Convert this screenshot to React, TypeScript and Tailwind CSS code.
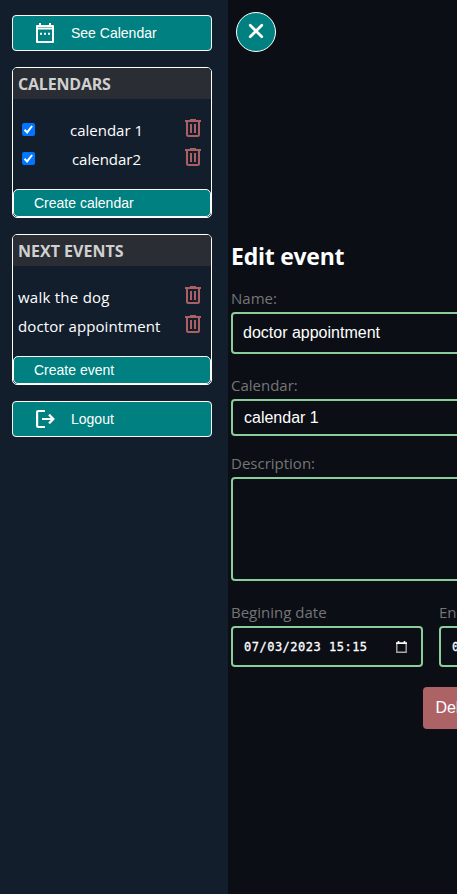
import React from 'react';

const sans = "font-['Open_Sans','Noto_Sans',sans-serif]";
const arial = "font-['Liberation_Sans',Arial,sans-serif]";

function CalendarIcon() {
  return (
    <svg width="24" height="24" viewBox="0 0 24 24" fill="none" stroke="white" strokeWidth="2" className="shrink-0">
      <path d="M4 5h16v16H4z" strokeLinejoin="round" />
      <path d="M4 7.5h16" />
      <path d="M7 2v3M17 2v3" />
      <path d="M7 12.8h2M11 12.8h2M15 12.8h2" />
    </svg>
  );
}

function LogoutIcon() {
  return (
    <svg width="24" height="24" viewBox="0 0 24 24" fill="none" stroke="white" strokeWidth="2.2" className="shrink-0">
      <path d="M12 4H5q-.9 0-.9.9v14.2q0 .9.9.9h7" />
      <path d="M9 12h11M16 7.6l4.4 4.4-4.4 4.4" />
    </svg>
  );
}

function Trash() {
  return (
    <svg width="16" height="18" viewBox="0 0 16 18" fill="none" stroke="#ac6064" className="-mt-[5px] shrink-0">
      <path d="M0 2h16M5 .8h6" strokeWidth="2" />
      <path d="M2 2v13.5q0 1.5 1.5 1.5h9q1.5 0 1.5-1.5V2" strokeWidth="2" />
      <path d="M6 5v9M10 5v9" strokeWidth="2" />
    </svg>
  );
}

function Panel({ title, action, children }: { title: React.ReactNode; action: string; children: React.ReactNode }) {
  return (
    <section className="flex h-[151px] w-[200px] flex-col rounded-[5px] border border-white">
      <h2 className={`h-[31px] shrink-0 rounded-t-[4px] bg-[#2a2d34] pl-[5px] text-[16px] font-bold leading-[33px] text-[#d0d0d0] ${sans}`}>{title}</h2>
      <div className="flex flex-1 flex-col pt-[17px]">{children}</div>
      <button className={`h-[28px] shrink-0 rounded-[5px] border border-white bg-[#008080] pl-[20px] text-left text-[14px] leading-[26px] text-white ${arial}`}>{action}</button>
    </section>
  );
}

function CalendarRow({ name }: { name: string }) {
  return (
    <div className="flex h-[29px] items-center justify-between pl-[9px] pr-[10px]">
      <span className="-mt-[3px] flex h-[13px] w-[13px] items-center justify-center rounded-[2px] bg-[#0075ff]">
        <svg width="11" height="11" viewBox="0 0 11 11" fill="none" stroke="white" strokeWidth="2"><path d="M1.5 5.8l2.6 2.6 5-6.4" /></svg>
      </span>
      <span className={`-ml-[7px] whitespace-nowrap text-[15px] text-white ${sans}`}>{name}</span>
      <Trash />
    </div>
  );
}

function EventRow({ name, spacing }: { name: string; spacing: string }) {
  return (
    <div className="flex h-[29px] items-center justify-between pl-[5px] pr-[10px]">
      <span className={`whitespace-nowrap text-[15px] text-white ${spacing} ${sans}`}>{name}</span>
      <Trash />
    </div>
  );
}

function Label({ children }: { children: string }) {
  return <div className={`h-[22px] whitespace-nowrap text-[15px] leading-[22px] text-[#757575] ${sans}`}>{children}</div>;
}

function DateField({ label, value }: { label: string; value: string }) {
  return (
    <div className="w-[192px] shrink-0">
      <Label>{label}</Label>
      <div className="mt-[3px] flex h-[41px] items-center justify-between rounded-[4px] border-2 border-[#8bcd9b] pl-[11px] pr-[14px] text-white">
        <span className="whitespace-pre font-['DejaVu_Sans_Mono',monospace] text-[12px] tracking-[0.5px] [-webkit-text-stroke:0.3px_white]">{value}</span>
        <svg width="11" height="12" viewBox="0 0 11 12" fill="none" stroke="#a8a8a8"><path d="M.8 2h9.4v9.2H.8z" strokeWidth="1.4" /><path d="M0 2.3h11M2.5 0v2M8.5 0v2" stroke="white" strokeWidth="1.6" /></svg>
      </div>
    </div>
  );
}

export default function App() {
  return (
    <div className="flex h-[894px] w-[457px] overflow-hidden bg-[#0b0e15]">
      <aside className="flex w-[228px] shrink-0 flex-col gap-[16px] bg-[#131e2d] pl-[12px] pt-[15px]">
        <button className={`flex h-[36px] w-[200px] items-center rounded-[4px] border border-white bg-[#008080] pl-[20px] text-[14px] text-white ${arial}`}>
          <CalendarIcon /><span className="ml-[14px]">See Calendar</span>
        </button>
        <Panel title={<span className="tracking-[-0.2px]">CALENDARS</span>} action="Create calendar">
          <CalendarRow name="calendar 1" />
          <CalendarRow name="calendar2" />
        </Panel>
        <Panel title={<span className="tracking-[0px]">NEXT EVENTS</span>} action="Create event">
          <EventRow name="walk the dog" spacing="tracking-[0.25px]" />
          <EventRow name="doctor appointment" spacing="tracking-[0.1px]" />
        </Panel>
        <button className={`flex h-[36px] w-[200px] items-center rounded-[4px] border border-white bg-[#008080] pl-[20px] text-[14px] text-white ${arial}`}>
          <LogoutIcon /><span className="ml-[14px]">Logout</span>
        </button>
      </aside>
      <main className="min-w-0 flex-1 overflow-hidden pl-[3px] pt-[12px]">
        <button className="ml-[5px] flex h-[40px] w-[40px] items-center justify-center rounded-full border border-white bg-[#008080]">
          <svg width="16" height="16" viewBox="0 0 16 16" className="-mt-[2px]" stroke="white" strokeWidth="2.7" strokeLinecap="round"><path d="M2.2 2.2l11.6 11.6M13.8 2.2L2.2 13.8" /></svg>
        </button>
        <form className="mt-[188px] w-[400px]">
          <h1 className={`h-[34px] text-[23px] font-bold leading-[33px] tracking-[-0.25px] text-white ${sans}`}>Edit event</h1>
          <div className="mt-[13px]"><Label>Name:</Label></div>
          <div className={`mt-[3px] h-[42px] rounded-[4px] border-2 border-[#8bcd9b] pl-[10px] text-[16px] leading-[37px] text-white ${arial}`}>doctor appointment</div>
          <div className="mt-[20px]"><Label>Calendar:</Label></div>
          <div className={`mt-[3px] h-[37px] rounded-[4px] border-2 border-[#8bcd9b] pl-[11px] text-[16px] leading-[33px] text-white ${arial}`}>calendar 1</div>
          <div className="mt-[16px]"><Label>Description:</Label></div>
          <div className="mt-[3px] h-[104px] rounded-[4px] border-2 border-[#8bcd9b]" />
          <div className="mt-[20px] flex gap-[16px]">
            <DateField label="Begining date" value="07/03/2023 15:15" />
            <DateField label="End date" value="07/03/2023 16:15" />
          </div>
          <button className={`ml-[192px] mt-[20px] h-[42px] w-[71px] rounded-[4px] bg-[#ad6265] text-[16px] text-white ${arial}`}>Delete</button>
        </form>
      </main>
    </div>
  );
}
